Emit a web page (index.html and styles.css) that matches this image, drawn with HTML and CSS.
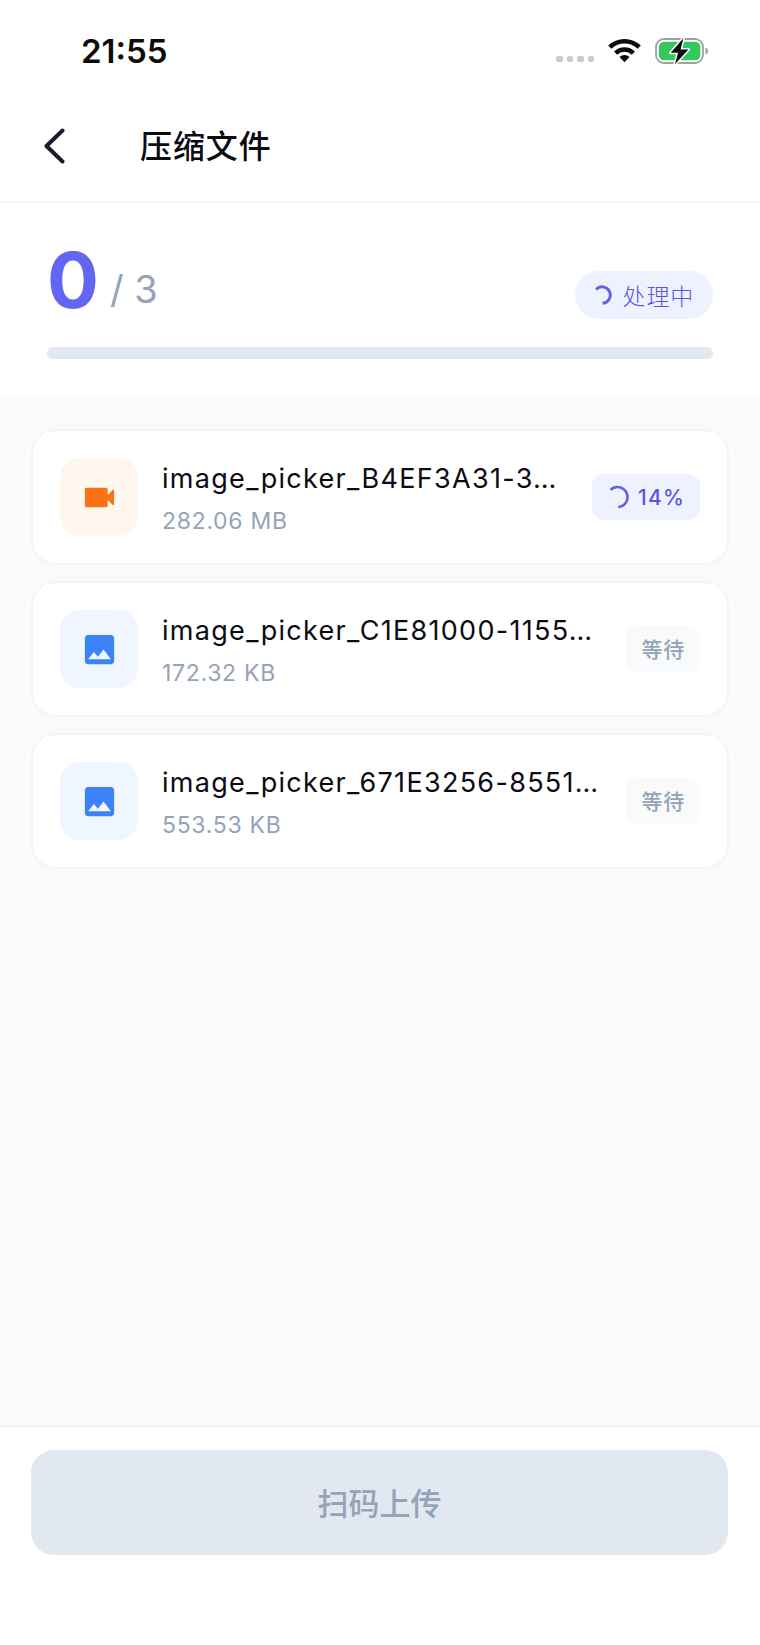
FILE: index.html
```html
<!DOCTYPE html>
<html lang="zh-CN">
<head>
    <meta charset="UTF-8">
    <meta name="viewport" content="width=device-width, initial-scale=1.0">
    <title>压缩文件</title>
    <link rel="stylesheet" href="styles.css">
</head>
<body>
    <div class="status-bar">
        <span class="time">21:55</span>
        <div class="status-icons">
            <div class="signal"><i></i><i></i><i></i><i></i></div>
            <svg class="wifi" width="33" height="25" viewBox="0 0 33 25">
                <g fill="none" stroke="#0b0b0c" stroke-width="4.6">
                    <path d="M1.8 9.2a21 21 0 0 1 29.4 0"/>
                    <path d="M7.6 15.2a12.7 12.7 0 0 1 17.8 0"/>
                </g>
                <path fill="#0b0b0c" d="M16.5 24.2l-5-5.1a7.1 7.1 0 0 1 10 0z"/>
            </svg>
            <svg class="battery" width="54" height="28" viewBox="0 0 54 28">
                <rect x="1" y="2" width="47" height="24" rx="8" fill="#fff" stroke="#a0a0a2" stroke-width="1.8"/>
                <path fill="#a0a0a2" d="M50.5 10.2c3.4 1.6 3.4 6 0 7.6z"/>
                <rect x="3.8" y="4.8" width="41.6" height="18.4" rx="5.2" fill="#34c759"/>
                <path d="M28.400 1.200L15.600 15.800h7.400l-3 11.400L33.400 12.400h-7.800z" fill="#0b0b0c" stroke="#fff" stroke-width="3" paint-order="stroke" stroke-linejoin="round"/>
            </svg>
        </div>
    </div>

    <header class="nav-bar">
        <button class="back-btn">
            <svg width="24" height="36" viewBox="0 0 24 36">
                <path d="M19.5 2.5L3.5 18l16 15.5" fill="none" stroke="#1a1c2c" stroke-width="4" stroke-linecap="round" stroke-linejoin="round"/>
            </svg>
        </button>
        <h1 class="title">压缩文件</h1>
    </header>

    <section class="summary">
        <div class="summary-row">
            <div class="count"><span class="done">0</span><span class="total">/ 3</span></div>
            <div class="chip">
                <svg width="20" height="20" viewBox="0 0 20 20">
                    <path d="M3.100 4.400A8.200 8.200 0 1 1 9.600 18.200" fill="none" stroke="#6161dc" stroke-width="2.900"/>
                </svg>
                <span>处理中</span>
            </div>
        </div>
        <div class="progress"></div>
    </section>

    <main class="file-list">
        <div class="file-card">
            <div class="file-icon video">
                <svg width="39" height="39" viewBox="0 0 24 24">
                    <path d="M17 10.5V7c0-.55-.45-1-1-1H4c-.55 0-1 .45-1 1v10c0 .55.45 1 1 1h12c.55 0 1-.45 1-1v-3.5l3 3c.4.4 1 .2 1-.4V7.900c0-.6-.6-.8-1-.4l-3 3z"/>
                </svg>
            </div>
            <div class="file-info">
                <div class="file-name">image_picker_B4EF3A31-3…</div>
                <div class="file-size">282.06 MB</div>
            </div>
            <div class="badge active">
                <svg width="22" height="24" viewBox="0 0 22 24">
                    <path d="M2.500 4.900A10 10 0 1 1 10.300 22" fill="none" stroke="#6161e0" stroke-width="2.600"/>
                </svg>
                <span>14%</span>
            </div>
        </div>

        <div class="file-card">
            <div class="file-icon image">
                <svg width="39" height="39" viewBox="0 0 24 24">
                    <path d="M21 19V5c0-1.100-.9-2-2-2H5c-1.100 0-2 .9-2 2v14c0 1.100.9 2 2 2h14c1.100 0 2-.9 2-2zM8.500 13.500l2.500 3.010L14.500 12l4.500 6H5l3.500-4.500z"/>
                </svg>
            </div>
            <div class="file-info">
                <div class="file-name">image_picker_C1E81000-1155…</div>
                <div class="file-size">172.32 KB</div>
            </div>
            <div class="badge">等待</div>
        </div>

        <div class="file-card">
            <div class="file-icon image">
                <svg width="39" height="39" viewBox="0 0 24 24">
                    <path d="M21 19V5c0-1.100-.9-2-2-2H5c-1.100 0-2 .9-2 2v14c0 1.100.9 2 2 2h14c1.100 0 2-.9 2-2zM8.500 13.500l2.500 3.010L14.500 12l4.500 6H5l3.500-4.500z"/>
                </svg>
            </div>
            <div class="file-info">
                <div class="file-name">image_picker_671E3256-8551…</div>
                <div class="file-size">553.53 KB</div>
            </div>
            <div class="badge">等待</div>
        </div>
    </main>

    <footer class="bottom-bar">
        <button class="upload-btn" disabled>扫码上传</button>
    </footer>
</body>
</html>
```

FILE: styles.css
```css
* {
    box-sizing: border-box;
}

body {
    margin: 0;
    height: 1645px;
    display: flex;
    flex-direction: column;
    background-color: #f8fafc;
    font-family: Inter, "Noto Sans CJK SC", sans-serif;
    color: #0b0b14;
}

button {
    border: none;
    background: none;
    padding: 0;
    font-family: inherit;
}

svg {
    display: block;
    flex: none;
}

/* Status bar */
.status-bar {
    height: 91px;
    padding: 10px 51px 0 81px;
    display: flex;
    justify-content: space-between;
    align-items: center;
    background-color: #fff;
}

.time {
    font-size: 33px;
    line-height: 40px;
    font-weight: 600;
    color: #0b0b0c;
}

.status-icons {
    display: flex;
    align-items: center;
}

.signal {
    display: flex;
    gap: 4px;
    margin: 17px 14px 0 0;
}

.signal i {
    width: 6.5px;
    height: 6.5px;
    border-radius: 2px;
    background-color: #cbcbcb;
}

.wifi {
    margin-right: 14px;
}

/* Header */
.nav-bar {
    height: 112px;
    padding: 0 43px;
    display: flex;
    align-items: center;
    background-color: #fff;
    border-bottom: 2px solid #f5f5f6;
}

.title {
    margin: 0 0 0 73px;
    padding-top: 1px;
    font-size: 32px;
    line-height: 48px;
    font-weight: 500;
    letter-spacing: 0.9px;
}

/* Overall progress */
.summary {
    height: 194px;
    padding: 32px 47px 0;
    background-color: #fff;
}

.summary-row {
    height: 112px;
    display: flex;
    justify-content: space-between;
}

.count {
    display: flex;
    align-items: flex-start;
}

.done {
    font-size: 77px;
    line-height: 91px;
    font-weight: 700;
    color: #6366f1;
}

.total {
    margin-left: 11px;
    font-size: 38px;
    line-height: 108px;
    color: #94a3b8;
}

.chip {
    height: 48px;
    margin-top: 36px;
    padding: 0 19px 0 18px;
    display: flex;
    align-items: center;
    gap: 10px;
    border-radius: 24px;
    background-color: #eef2ff;
    color: #5a55e0;
    font-size: 23px;
    font-weight: 300;
    letter-spacing: 0.8px;
}

.progress {
    height: 12px;
    border-radius: 6px;
    background-color: #e2e8f0;
}

/* Files */
.file-list {
    flex: 1;
    padding: 32px 31px 0;
    display: flex;
    flex-direction: column;
    gap: 16px;
}

.file-card {
    height: 136px;
    padding: 0 27px;
    display: flex;
    align-items: center;
    border: 2px solid #f1f5f9;
    border-radius: 24px;
    background-color: #fff;
}

.file-icon {
    width: 78px;
    height: 78px;
    flex: none;
    display: flex;
    align-items: center;
    justify-content: center;
    border-radius: 20px;
}

.file-icon.video {
    background-color: #fff7ed;
    fill: #f97316;
}

.file-icon.image {
    background-color: #eff6ff;
    fill: #3b82f6;
}

.file-info {
    flex: 1;
    min-width: 0;
    padding: 3px 0 0 24px;
    white-space: nowrap;
}

.file-name {
    font-size: 27px;
    line-height: 38px;
    letter-spacing: 1.3px;
}

.file-size {
    margin-top: 6px;
    font-size: 23px;
    line-height: 34px;
    letter-spacing: 0.7px;
    color: #94a3b8;
}

.badge {
    height: 46px;
    flex: none;
    padding: 0 15px 2px 16px;
    display: flex;
    align-items: center;
    gap: 8px;
    border-radius: 12px;
    background-color: #f8fafc;
    color: #94a3b8;
    font-size: 21px;
    font-weight: 500;
    letter-spacing: 0.8px;
}

.badge.active {
    padding: 0 15px 0 16px;
    background-color: #eef2ff;
    color: #5a55e0;
    letter-spacing: 1.2px;
}

/* Bottom action */
.bottom-bar {
    height: 220px;
    padding: 23px 32px 0 31px;
    background-color: #fff;
    border-top: 2px solid #f1f5f9;
}

.upload-btn {
    width: 100%;
    height: 105px;
    padding-bottom: 2px;
    border-radius: 23px;
    background-color: #e2e8f0;
    color: #94a3b8;
    font-size: 31px;
    font-weight: 500;
}
```
